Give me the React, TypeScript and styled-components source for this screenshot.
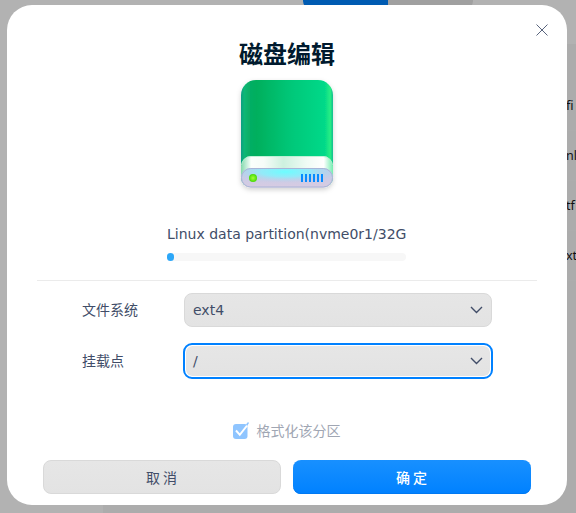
import React from "react";
import styled, { createGlobalStyle, css } from "styled-components";

const GlobalStyle = createGlobalStyle`
  * { box-sizing: border-box; }
  html, body { margin: 0; overflow: hidden; }
  body { font-family: "DejaVu Sans", "Noto Sans CJK SC", sans-serif; font-size: 14px; color: #414d68; }
  button { font: inherit; color: inherit; margin: 0; padding: 0; }
`;

const Screen = styled.div`
  position: relative;
  width: 576px;
  height: 513px;
  overflow: hidden;
  background: #b2b2b2;
`;

const Background = styled.div`
  height: 513px;
  display: flex;
  flex-direction: column;
`;

const TabStrip = styled.div`
  height: 44px;
  flex: none;
  display: flex;
  padding-left: 303px;
`;

const BackTab = styled.div<{ $active?: boolean }>`
  width: 85px;
  height: 9px;
  background: ${(p) => (p.$active ? "#005bb2" : "#a0a0a0")};
  border-radius: ${(p) => (p.$active ? "0 0 0 8px" : "0 0 8px 0")};
`;

const BackPanel = styled.div`
  flex: 1;
  margin-left: 103px;
  background: #acacac;
  padding-top: 37px;
`;

const BackRow = styled.div`
  height: 50px;
  padding-left: 463px;
  font: 12.5px/50px "Noto Sans", sans-serif;
  color: #111;
  white-space: nowrap;
  border-bottom: 1px solid #adadad;
`;

const Dialog = styled.section`
  position: absolute;
  left: 7px;
  top: 5px;
  width: 560px;
  height: 500px;
  border-radius: 25px;
  background: #fff;
  display: flex;
  flex-direction: column;
  align-items: center;
`;

const CloseButton = styled.button`
  position: absolute;
  right: 10px;
  top: 10px;
  width: 30px;
  height: 30px;
  border: 0;
  background: none;
  display: grid;
  place-items: center;
`;

const Title = styled.h1`
  margin: 30px 0 1px;
  height: 36px;
  font: 700 24px/36px "Noto Sans CJK SC", sans-serif;
  color: #001a2e;
`;

const DiskArt = styled.svg`
  flex: none;
  display: block;
  width: 110px;
  height: 128px;
`;

const PartitionInfo = styled.div`
  width: 240px;
  height: 80px;
  padding: 20px 1px 0 0;
`;

const PartitionName = styled.div`
  height: 33px;
  line-height: 28px;
  white-space: nowrap;
`;

const Progress = styled.div`
  height: 8px;
  border-radius: 4px;
  background: #f7f7f7;
`;

const ProgressFill = styled.div`
  width: 7px;
  height: 8px;
  border-radius: 4px;
  background: #2ca7f8;
`;

const Divider = styled.hr`
  margin: 0;
  flex: none;
  border: 0;
  width: 500px;
  height: 1px;
  background: #ebebeb;
`;

const Form = styled.div`
  width: 410px;
  padding-top: 12px;
  display: grid;
  grid-template-columns: 102px 308px;
  grid-auto-rows: 34px;
  row-gap: 17px;
  align-items: center;
`;

const Label = styled.label`
  height: 34px;
  font: 400 14px/32px "Noto Sans CJK SC", sans-serif;
`;

const greySurface = css`
  border: 1px solid #d9d9d9;
  border-radius: 8px;
  background: linear-gradient(#e6e6e6, #e3e3e3);
`;

const Select = styled.div<{ $focused?: boolean }>`
  ${greySurface}
  height: 34px;
  padding: 0 8px;
  display: flex;
  align-items: center;
  justify-content: space-between;
  ${(p) =>
    p.$focused &&
    css`
      border: 2px solid #fff;
      outline: 2px solid #0081ff;
      outline-offset: -1px;
      padding: 0 7px;
      background-clip: padding-box;
    `}
`;

const CheckRow = styled.label`
  margin-top: 41px;
  margin-right: 2px;
  height: 24px;
  display: flex;
  align-items: center;
  gap: 8px;
  color: #a0a6b3;
  font: 400 14px/24px "Noto Sans CJK SC", sans-serif;
`;

const CheckText = styled.span`
  padding-bottom: 2px;
`;

const Actions = styled.div`
  margin-top: 17px;
  display: flex;
  gap: 12px;
`;

const ActionButton = styled.button<{ $primary?: boolean }>`
  width: 238px;
  height: 34px;
  ${greySurface}
  ${(p) =>
    p.$primary &&
    css`
      color: #fff;
      border: 0;
      background: linear-gradient(#1890ff, #0081ff);
      box-shadow: inset 0 -1px #0079f2;
    `}
  padding: 0 1px 1px 0;
  font: ${(p) => (p.$primary ? 500 : 400)} 14px/32px "Noto Sans CJK SC", sans-serif;
  white-space: pre;
`;

function Disk() {
  return (
    <DiskArt viewBox="0 0 110 128">
      <defs>
        <linearGradient id="body">
          <stop offset="0" stopColor="#0a9d83" />
          <stop offset=".035" stopColor="#0ab775" />
          <stop offset=".09" stopColor="#07ae66" />
          <stop offset=".17" stopColor="#02af5d" />
          <stop offset=".55" stopColor="#02c879" />
          <stop offset=".91" stopColor="#01d989" />
          <stop offset=".97" stopColor="#28ee84" />
          <stop offset="1" stopColor="#12bd91" />
        </linearGradient>
        <linearGradient id="lip">
          <stop offset="0" stopColor="#84d9ad" />
          <stop offset=".11" stopColor="#fafffc" />
          <stop offset=".25" stopColor="#f6fcf8" />
          <stop offset=".46" stopColor="#cdf1df" />
          <stop offset=".72" stopColor="#f0fbf5" />
          <stop offset=".9" stopColor="#fff" />
          <stop offset="1" stopColor="#74edb0" />
        </linearGradient>
        <linearGradient id="base" x2="0" y2="1">
          <stop offset="0" stopColor="#b9cdea" />
          <stop offset="1" stopColor="#d9cbe2" />
        </linearGradient>
        <radialGradient id="shine" cx=".48" cy=".18" r=".6">
          <stop offset="0" stopColor="#6cfdff" />
          <stop offset=".45" stopColor="#8ceffb" stopOpacity=".85" />
          <stop offset="1" stopColor="#bdcce9" stopOpacity="0" />
        </radialGradient>
        <radialGradient id="led">
          <stop offset="0" stopColor="#a4ff38" />
          <stop offset="1" stopColor="#46da07" />
        </radialGradient>
        <filter id="shadow" x="-20%" y="-20%" width="140%" height="140%">
          <feDropShadow dx="0" dy="2" stdDeviation="2.5" floodColor="#000" floodOpacity=".18" />
        </filter>
      </defs>
      <g filter="url(#shadow)">
        <path d="M9 23a15 15 0 0 1 15-15h62a15 15 0 0 1 15 15v83a9 9 0 0 1-9 9H18a9 9 0 0 1-9-9z" fill="url(#body)" />
        <path d="M9 94a10 10 0 0 1 10-10h72a10 10 0 0 1 10 10v12H9z" fill="url(#lip)" />
        <path d="M9.5 93a9.5 9.5 0 0 1 9.5-8.5h72a9.5 9.5 0 0 1 9.5 8.5" fill="none" stroke="#b4eed1" strokeWidth=".8" />
        <rect x="9" y="96" width="92" height="19.5" rx="9.7" fill="url(#base)" />
        <rect x="9.5" y="96.5" width="91" height="18.5" rx="9.2" fill="url(#shine)" stroke="#a9b5d7" strokeWidth="1" />
      </g>
      <circle cx="21" cy="106" r="4" fill="url(#led)" />
      <path d="M70 102v8M74 102v8M78 102v8M82 102v8M86 102v8M90 102v8" stroke="#078cff" strokeWidth="2" />
    </DiskArt>
  );
}

function Chevron() {
  return (
    <svg width="13" height="10" viewBox="0 0 13 10" fill="none" stroke="#414d68" strokeWidth="1.4">
      <path d="M1 2l5.5 5.5L12 2" />
    </svg>
  );
}

function Check() {
  return (
    <svg width="17" height="18" viewBox="0 0 17 18">
      <rect x="1" y="2" width="14.5" height="15" rx="3" fill="#8fc5ff" />
      <path d="M4 8.5l3.8 4.3L15.5 3" fill="none" stroke="#fff" strokeWidth="2" />
      <path d="M14 2.4L16 0l1 1-1.8 3z" fill="#8fc5ff" />
    </svg>
  );
}

export default function App() {
  return (
    <>
      <GlobalStyle />
      <Screen>
        <Background>
          <TabStrip>
            <BackTab $active />
            <BackTab />
          </TabStrip>
          <BackPanel>
            {["fi", "nl", "tf", "xt"].map((name) => (
              <BackRow key={name}>{name}</BackRow>
            ))}
          </BackPanel>
        </Background>
        <Dialog role="dialog">
          <CloseButton aria-label="关闭">
            <svg width="12" height="12" viewBox="0 0 12 12" stroke="#59647d" strokeWidth="1">
              <path d="M.5.5l11 11M11.5.5l-11 11" />
            </svg>
          </CloseButton>
          <Title>磁盘编辑</Title>
          <Disk />
          <PartitionInfo>
            <PartitionName>Linux data partition(nvme0r1/32G</PartitionName>
            <Progress>
              <ProgressFill />
            </Progress>
          </PartitionInfo>
          <Divider />
          <Form>
            <Label>文件系统</Label>
            <Select>
              ext4
              <Chevron />
            </Select>
            <Label>挂载点</Label>
            <Select $focused>
              /
              <Chevron />
            </Select>
          </Form>
          <CheckRow>
            <Check />
            <CheckText>格式化该分区</CheckText>
          </CheckRow>
          <Actions>
            <ActionButton>取 消</ActionButton>
            <ActionButton $primary>确 定</ActionButton>
          </Actions>
        </Dialog>
      </Screen>
    </>
  );
}
